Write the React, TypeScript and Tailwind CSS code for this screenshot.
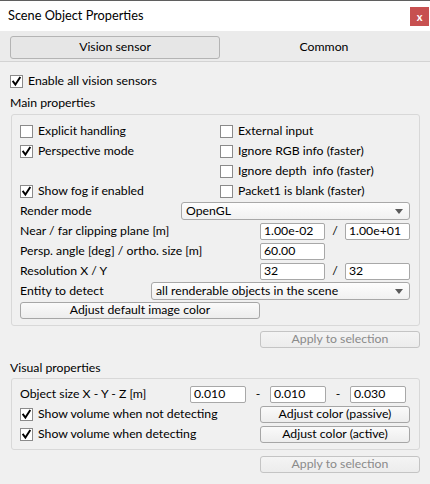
import React from "react";

const FONT = { fontFamily: 'Lato, "Liberation Sans", Arial, sans-serif' };

function Check({ on }: { on?: boolean }) {
  return (
    <span className="w-[13px] h-[13px] shrink-0 bg-white border border-[#8a8a8a] flex items-center justify-center">
      {on && (
        <svg width="11" height="11" viewBox="0 0 11 11">
          <path d="M2.2 5.6 L4.4 8.6 L8.8 1.8" fill="none" stroke="#000" strokeWidth="1.9" strokeLinecap="square" strokeLinejoin="miter" />
        </svg>
      )}
    </span>
  );
}

function CheckRow({ on, label }: { on?: boolean; label: string }) {
  return (
    <div className="h-[20px] flex items-center gap-[5px]">
      <Check on={on} />
      <span className="whitespace-pre">{label}</span>
    </div>
  );
}

function Input({ value, w }: { value: string; w: string }) {
  return (
    <div className={`${w} h-[17px] bg-white border border-[#a8a8a8] rounded-[2px] flex items-center pl-[3px] leading-none`}>
      {value}
    </div>
  );
}

function Combo({ value, w }: { value: string; w: string }) {
  return (
    <div className={`${w} h-[18px] bg-gradient-to-b from-[#fdfdfd] to-[#f1f1f1] border border-[#a8a8a8] rounded-[3px] flex items-center pl-[4px] pr-[6px] justify-between leading-none`}>
      <span>{value}</span>
      <svg width="8" height="5" viewBox="0 0 8 5">
        <path d="M0 0 L8 0 L4 5 Z" fill="#5a5a5a" />
      </svg>
    </div>
  );
}

function Button({ label, w, disabled }: { label: string; w: string; disabled?: boolean }) {
  return (
    <div
      className={`${w} h-[17px] rounded-[3px] border flex items-center justify-center leading-none ${
        disabled
          ? "border-[#c4c4c4] bg-gradient-to-b from-[#f4f4f4] to-[#ececec] text-[#8a8a8a]"
          : "border-[#a6a6a6] bg-gradient-to-b from-[#fafafa] to-[#ededed] text-black"
      }`}
    >
      {label}
    </div>
  );
}

export default function App() {
  return (
    <div className="w-[430px] h-[484px] overflow-hidden bg-[#f0f0f0] text-[12.25px] text-black flex flex-col" style={FONT}>
      {/* title bar */}
      <div className="h-[31px] shrink-0 bg-white border-t border-[#5f5f5f] flex items-center pl-[8px] pr-[1px]">
        <span className="text-[12.75px] flex-1">Scene Object Properties</span>
        <div className="w-[19px] h-[19px] bg-[#c75050] text-white text-[11px] font-bold flex items-center justify-center leading-none">x</div>
      </div>
      {/* tab strip */}
      <div className="h-[31px] shrink-0 bg-[#ebebeb] border-b border-[#d3d3d3] flex pt-[5px] pl-[10px]">
        <div className="w-[210px] h-[23px] rounded-[3px] border border-[#b4b4b4] bg-[#e6e6e6] flex items-center justify-center">
          Vision sensor
        </div>
        <div className="w-[208px] h-[23px] flex items-center justify-center">Common</div>
      </div>
      {/* body */}
      <div className="flex flex-col pl-[10px]">
        <div className="mt-[9px]">
          <CheckRow on label="Enable all vision sensors" />
        </div>
        <div className="mt-[2px] h-[20px] flex items-center">Main properties</div>
        <div className="mt-[1px] ml-[1px] w-[409px] border border-[#d8d8d8] rounded-[3px] pt-[6px] pb-[6px] pl-[8px]">
          <div className="flex">
            <div className="w-[200px] flex flex-col">
              <CheckRow label="Explicit handling" />
              <CheckRow on label="Perspective mode" />
              <div className="h-[20px]" />
              <CheckRow on label="Show fog if enabled" />
            </div>
            <div className="flex flex-col">
              <CheckRow label="External input" />
              <CheckRow label="Ignore RGB info (faster)" />
              <CheckRow label="Ignore depth  info (faster)" />
              <CheckRow label="Packet1 is blank (faster)" />
            </div>
          </div>
          <div className="h-[20px] flex items-center">
            <span className="w-[161px]">Render mode</span>
            <Combo value="OpenGL" w="w-[229px]" />
          </div>
          <div className="h-[20px] flex items-center">
            <span className="w-[240px]">Near / far clipping plane [m]</span>
            <Input value="1.00e-02" w="w-[65px]" />
            <span className="w-[20px] text-center">/</span>
            <Input value="1.00e+01" w="w-[65px]" />
          </div>
          <div className="h-[20px] flex items-center">
            <span className="w-[240px]">Persp. angle [deg] / ortho. size [m]</span>
            <Input value="60.00" w="w-[65px]" />
          </div>
          <div className="h-[20px] flex items-center">
            <span className="w-[240px]">Resolution X / Y</span>
            <Input value="32" w="w-[65px]" />
            <span className="w-[20px] text-center">/</span>
            <Input value="32" w="w-[65px]" />
          </div>
          <div className="h-[20px] flex items-center">
            <span className="w-[131px]">Entity to detect</span>
            <Combo value="all renderable objects in the scene" w="w-[259px]" />
          </div>
          <div className="h-[18px] flex items-center">
            <Button label="Adjust default image color" w="w-[240px]" />
          </div>
        </div>
        <div className="mt-[5px] ml-[250px]">
          <Button label="Apply to selection" w="w-[160px]" disabled />
        </div>
        <div className="mt-[10px] h-[20px] flex items-center">Visual properties</div>
        <div className="ml-[1px] w-[409px] border border-[#d8d8d8] rounded-[3px] pt-[5px] pb-[5px] pl-[8px]">
          <div className="h-[20px] flex items-center">
            <span className="w-[170px]">Object size X - Y - Z [m]</span>
            <Input value="0.010" w="w-[56px]" />
            <span className="w-[24px] text-center">-</span>
            <Input value="0.010" w="w-[56px]" />
            <span className="w-[24px] text-center">-</span>
            <Input value="0.030" w="w-[56px]" />
          </div>
          <div className="h-[20px] flex items-center">
            <div className="w-[240px]">
              <CheckRow on label="Show volume when not detecting" />
            </div>
            <Button label="Adjust color (passive)" w="w-[150px]" />
          </div>
          <div className="h-[20px] flex items-center">
            <div className="w-[240px]">
              <CheckRow on label="Show volume when detecting" />
            </div>
            <Button label="Adjust color (active)" w="w-[150px]" />
          </div>
        </div>
        <div className="mt-[6px] ml-[250px]">
          <Button label="Apply to selection" w="w-[160px]" disabled />
        </div>
      </div>
    </div>
  );
}
